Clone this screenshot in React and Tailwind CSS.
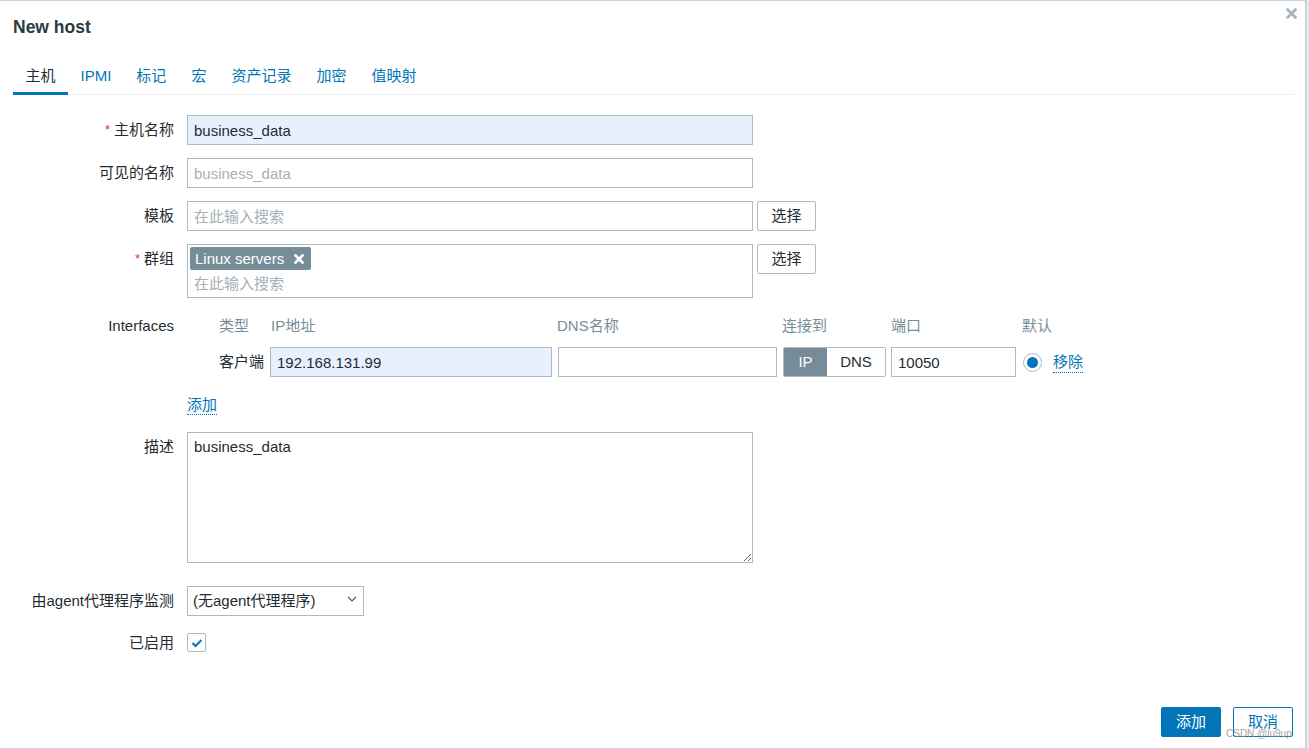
import React from "react";

const FONT = { fontFamily: '"Liberation Sans", Arial, "Noto Sans CJK SC", sans-serif' };

function Label({ children, required, className = "" }) {
  return (
    <div className={"w-[187px] shrink-0 pr-[13px] text-right text-[15px] leading-[30px] text-[#1f2c33] " + className}>
      {required && <span className="text-[#e33734] mr-[4px] text-[13px] align-top">*</span>}
      {children}
    </div>
  );
}

function XIcon({ className, color }) {
  return (
    <svg viewBox="0 0 10 10" className={className}>
      <path d="M1.5 1.5 L8.5 8.5 M8.5 1.5 L1.5 8.5" stroke={color} strokeWidth="2.6" strokeLinecap="square" fill="none" />
    </svg>
  );
}

function SelectBtn() {
  return (
    <button className="ml-[4px] w-[59px] h-[30px] border border-[#acbbc2] rounded-[2px] bg-white text-[15px] text-[#1f2c33] leading-[28px] text-center">
      选择
    </button>
  );
}

const inputCls =
  "h-[30px] border border-[#acbbc2] px-[6px] text-[15px] text-[#1f2c33] outline-none placeholder:text-[#a6b0b6]";

export default function App() {
  return (
    <div className="w-[1309px] h-[749px] flex bg-[#dfe5e8] overflow-hidden" style={FONT}>
      <div className="relative w-[1306px] h-[749px] shrink-0 bg-white border-t border-b border-r border-[#c8d2d7] flex flex-col">
        {/* close */}
        <div className="absolute top-[7px] right-[8px]">
          <XIcon className="w-[11px] h-[11px]" color="#a9b7be" />
        </div>

        {/* title */}
        <div className="pl-[13px] pt-[15px] text-[17.5px] leading-[22px] font-bold text-[#2c3a43]">New host</div>

        {/* tabs */}
        <div className="mt-[20px] ml-[13px] mr-[11px] flex border-b border-[#ebeef0] text-[15px] leading-[20px]">
          <div className="px-[12.5px] pt-[8px] pb-[6px] border-b-[3px] border-[#0275b8] text-[#1f2c33] -mb-px">主机</div>
          {["IPMI", "标记", "宏", "资产记录", "加密", "值映射"].map((t) => (
            <div key={t} className="px-[12.5px] pt-[8px] pb-[6px] border-b-[3px] border-transparent text-[#0275b8] -mb-px">
              {t}
            </div>
          ))}
        </div>

        {/* form */}
        <div className="pt-[20px] flex flex-col">
          <div className="flex">
            <Label required>主机名称</Label>
            <input readOnly value="business_data" className={inputCls + " w-[566px] bg-[#e8f0fe]"} />
          </div>

          <div className="flex mt-[13px]">
            <Label>可见的名称</Label>
            <input readOnly placeholder="business_data" className={inputCls + " w-[566px] bg-white"} />
          </div>

          <div className="flex mt-[13px]">
            <Label>模板</Label>
            <input readOnly placeholder="在此输入搜索" className={inputCls + " w-[566px] bg-white"} />
            <SelectBtn />
          </div>

          <div className="flex mt-[13px]">
            <Label required>群组</Label>
            <div className="w-[566px] h-[54px] border border-[#acbbc2] bg-white pt-[2px] pl-[2px]">
              <div className="inline-flex items-center h-[23px] bg-[#768d99] rounded-[2px] pl-[5px] pr-[7px] text-white text-[15px] leading-[23px]">
                <span>Linux servers</span>
                <XIcon className="ml-[10px] w-[10px] h-[10px]" color="#ffffff" />
              </div>
              <div className="pl-[4px] mt-[3px] text-[15px] leading-[20px] text-[#a6b0b6]">在此输入搜索</div>
            </div>
            <SelectBtn />
          </div>

          {/* interfaces header */}
          <div className="flex mt-[18px] text-[15px] leading-[20px]">
            <div className="w-[187px] shrink-0 pr-[13px] text-right text-[#1f2c33]">Interfaces</div>
            <div className="flex text-[#768d99] pl-[32px]">
              <div className="w-[51px]">类型</div>
              <div className="w-[287px] pl-[1px]">IP地址</div>
              <div className="w-[225px]">DNS名称</div>
              <div className="w-[109px]">连接到</div>
              <div className="w-[131px]">端口</div>
              <div>默认</div>
            </div>
          </div>

          {/* interface row */}
          <div className="flex mt-[11px] items-center">
            <div className="w-[187px] shrink-0" />
            <div className="flex items-center pl-[32px]">
              <div className="w-[51px] text-[15px] text-[#1f2c33]">客户端</div>
              <input readOnly value="192.168.131.99" className={inputCls + " w-[282px] bg-[#e8f0fe]"} />
              <input readOnly value="" className={inputCls + " w-[219px] ml-[6px] bg-white"} />
              <div className="ml-[6px] flex h-[30px] w-[103px] rounded-[2px] border border-[#acbbc2] overflow-hidden text-[15px] leading-[28px]">
                <div className="w-[43px] bg-[#768d99] text-white text-center">IP</div>
                <div className="flex-1 bg-white text-[#1f2c33] text-center">DNS</div>
              </div>
              <input readOnly value="10050" className={inputCls + " w-[125px] ml-[5px] bg-white"} />
              <div className="ml-[7px] w-[19px] h-[19px] rounded-full border border-[#acbbc2] bg-white flex items-center justify-center">
                <div className="w-[11px] h-[11px] rounded-full bg-[#0275b8]" />
              </div>
              <span className="ml-[11px] text-[15px] leading-[20px] text-[#0275b8] border-b border-dotted border-[#0275b8]">移除</span>
            </div>
          </div>

          {/* add link */}
          <div className="flex mt-[18px]">
            <div className="w-[187px] shrink-0" />
            <span className="text-[15px] leading-[19px] text-[#0275b8] border-b border-dotted border-[#0275b8]">添加</span>
          </div>

          {/* description */}
          <div className="flex mt-[17px]">
            <Label>描述</Label>
            <textarea
              readOnly
              defaultValue="business_data"
              className="w-[566px] h-[131px] border border-[#acbbc2] px-[6px] py-[4px] text-[15px] leading-[20px] text-[#1f2c33] outline-none resize"
            />
          </div>

          {/* agent */}
          <div className="flex mt-[23px]">
            <Label>由agent代理程序监测</Label>
            <div className="w-[177px] h-[30px] border border-[#acbbc2] bg-white flex items-center pl-[5px] pr-[6px] text-[15px] text-[#1f2c33]">
              <span className="flex-1">(无agent代理程序)</span>
              <svg viewBox="0 0 10 6" className="w-[10px] h-[6px] -mt-[4px]">
                <path d="M1 1 L5 5 L9 1" stroke="#4b5960" strokeWidth="1.2" fill="none" />
              </svg>
            </div>
          </div>

          {/* enabled */}
          <div className="flex mt-[17px] items-center h-[19px]">
            <div className="w-[187px] shrink-0 pr-[13px] text-right text-[15px] leading-[19px] text-[#1f2c33]">已启用</div>
            <div className="w-[19px] h-[19px] border border-[#acbbc2] rounded-[2px] bg-white flex items-center justify-center">
              <svg viewBox="0 0 12 10" className="w-[12px] h-[10px]">
                <path d="M1.5 5 L4.5 8 L10.5 2" stroke="#0275b8" strokeWidth="2" fill="none" />
              </svg>
            </div>
          </div>
        </div>

        {/* footer */}
        <div className="mt-auto flex justify-end gap-[12px] pr-[12px] pb-[11px]">
          <button className="w-[60px] h-[30px] rounded-[2px] bg-[#0275b8] text-white text-[15px]">添加</button>
          <button className="w-[60px] h-[30px] rounded-[2px] border border-[#0275b8] bg-white text-[#0275b8] text-[15px]">取消</button>
        </div>

        <div className="absolute left-[1226px] top-[727px] text-[10px] leading-[12px] text-[#8e8e8e] opacity-80">CSDN @lu9up</div>
      </div>
      <div className="flex-1 border-l border-[#cfd8dc] bg-[#e4e9ec]" />
    </div>
  );
}
